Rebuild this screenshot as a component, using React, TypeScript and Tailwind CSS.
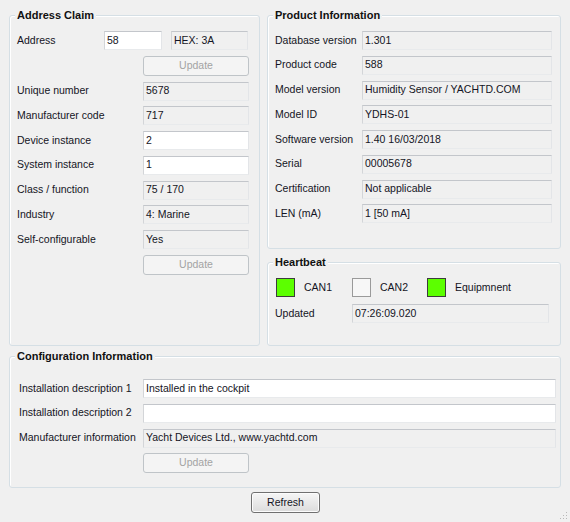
import type { ReactNode } from "react";

const TEXT = "text-[10.5px] text-[#141424]";

function Group({ title, className, children }: { title: string; className: string; children: ReactNode }) {
  return (
    <div className={`relative rounded-[3px] border border-[#d5dfe5] shadow-[inset_1px_1px_0_#ffffff] ${className}`}>
      <span className="absolute -top-[8px] left-[5px] bg-[#f0f0f0] px-[2px] text-[11px] font-bold leading-[14px] text-[#111]">
        {title}
      </span>
      {children}
    </div>
  );
}

function Box({ value, w, edit }: { value?: string; w: string; edit?: boolean }) {
  return (
    <div
      className={`flex h-[19px] items-center border border-t-[#c3c6cb] border-l-[#d3d5d8] border-r-[#e3e5e8] border-b-[#e8eaec] pl-[2px] ${w} ${
        edit ? "bg-white" : "bg-[#f0f0f0]"
      } ${TEXT}`}
    >
      {value}
    </div>
  );
}

function Row({ label, lw, children }: { label: string; lw: string; children: ReactNode }) {
  return (
    <div className="flex h-[19px] items-center">
      <span className={`${lw} ${TEXT}`}>{label}</span>
      {children}
    </div>
  );
}

function UpdateButton({ ml }: { ml: string }) {
  return (
    <button
      type="button"
      disabled
      className={`${ml} h-[20px] w-[106px] rounded-[3px] border border-[#bfc4c8] bg-[#f4f4f4] text-[10.5px] text-[#a3a3a3]`}
    >
      Update
    </button>
  );
}

function Lamp({ on, label, w }: { on: boolean; label: string; w: string }) {
  return (
    <div className={`flex items-center ${w}`}>
      <div
        className={`h-[19px] w-[19px] border ${
          on ? "border-[#3c3c3c] bg-[#5cff00]" : "border-[#9a9a9a] bg-[#f7f7f7]"
        }`}
      />
      <span className={`ml-[9px] ${TEXT}`}>{label}</span>
    </div>
  );
}

export default function App() {
  const product = [
    ["Database version", "1.301"],
    ["Product code", "588"],
    ["Model version", "Humidity Sensor / YACHTD.COM"],
    ["Model ID", "YDHS-01"],
    ["Software version", "1.40 16/03/2018"],
    ["Serial", "00005678"],
    ["Certification", "Not applicable"],
    ["LEN (mA)", "1 [50 mA]"],
  ];

  return (
    <div className="relative h-[522px] w-[570px] overflow-hidden bg-[#f0f0f0] font-['Liberation_Sans',Arial,sans-serif]">
      <div className="flex pl-[9px] pt-[15px]">
        {/* Address Claim */}
        <Group title="Address Claim" className="h-[331px] w-[251px]">
          <div className="flex flex-col gap-[5.75px] pl-[7px] pt-[15px]">
            <div className="flex h-[19px] items-center">
              <span className={`w-[87px] ${TEXT}`}>Address</span>
              <Box value="58" w="w-[58px]" edit />
              <div className="ml-[9px]">
                <Box value="HEX: 3A" w="w-[77px]" />
              </div>
            </div>
            <UpdateButton ml="ml-[126px]" />
            <Row label="Unique number" lw="w-[126px]"><Box value="5678" w="w-[106px]" /></Row>
            <Row label="Manufacturer code" lw="w-[126px]"><Box value="717" w="w-[106px]" /></Row>
            <Row label="Device instance" lw="w-[126px]"><Box value="2" w="w-[106px]" edit /></Row>
            <Row label="System instance" lw="w-[126px]"><Box value="1" w="w-[106px]" edit /></Row>
            <Row label="Class / function" lw="w-[126px]"><Box value="75 / 170" w="w-[106px]" /></Row>
            <Row label="Industry" lw="w-[126px]"><Box value="4: Marine" w="w-[106px]" /></Row>
            <Row label="Self-configurable" lw="w-[126px]"><Box value="Yes" w="w-[106px]" /></Row>
            <UpdateButton ml="ml-[126px]" />
          </div>
        </Group>

        <div className="ml-[7px] flex flex-col">
          {/* Product Information */}
          <Group title="Product Information" className="h-[234px] w-[294px]">
            <div className="flex flex-col gap-[5.75px] pl-[7px] pt-[15px]">
              {product.map(([l, v]) => (
                <Row key={l} label={l} lw="w-[87px]">
                  <Box value={v} w="w-[190px]" />
                </Row>
              ))}
            </div>
          </Group>

          {/* Heartbeat */}
          <Group title="Heartbeat" className="mt-[13px] h-[84px] w-[294px]">
            <div className="flex flex-col gap-[7px] pl-[8px] pt-[15px]">
              <div className="flex">
                <Lamp on label="CAN1" w="w-[76px]" />
                <Lamp on={false} label="CAN2" w="w-[75px]" />
                <Lamp on label="Equipmnent" w="w-[100px]" />
              </div>
              <div className="-ml-[1px] flex h-[19px] items-center">
                <span className={`w-[77px] ${TEXT}`}>Updated</span>
                <Box value="07:26:09.020" w="w-[197px]" />
              </div>
            </div>
          </Group>
        </div>
      </div>

      {/* Configuration Information */}
      <div className="pl-[9px] pt-[10px]">
        <Group title="Configuration Information" className="h-[132px] w-[552px]">
          <div className="flex flex-col gap-[5.75px] pl-[9px] pt-[22px]">
            <Row label="Installation description 1" lw="w-[124px]">
              <Box value="Installed in the cockpit" w="w-[413px]" edit />
            </Row>
            <Row label="Installation description 2" lw="w-[124px]">
              <Box w="w-[413px]" edit />
            </Row>
            <Row label="Manufacturer information" lw="w-[124px]">
              <Box value="Yacht Devices Ltd., www.yachtd.com" w="w-[413px]" />
            </Row>
            <UpdateButton ml="ml-[124px]" />
          </div>
        </Group>
      </div>

      <div className="flex pl-[251px] pt-[4px]">
        <button
          type="button"
          className="h-[21px] w-[69px] rounded-[3px] border border-[#707070] bg-gradient-to-b from-[#f6f6f6] to-[#dcdcdc] text-[10.5px] text-[#141424] shadow-[inset_0_0_0_1px_#fcfcfc]"
        >
          Refresh
        </button>
      </div>

      {/* size grip */}
      <svg className="absolute bottom-[2px] right-[2px]" width="10" height="10" viewBox="0 0 10 10">
        {[
          [8, 2],
          [5, 5],
          [8, 5],
          [2, 8],
          [5, 8],
          [8, 8],
        ].map(([x, y]) => (
          <rect key={`${x}-${y}`} x={x} y={y} width="1" height="1" fill="#b8b8b8" />
        ))}
      </svg>
    </div>
  );
}
